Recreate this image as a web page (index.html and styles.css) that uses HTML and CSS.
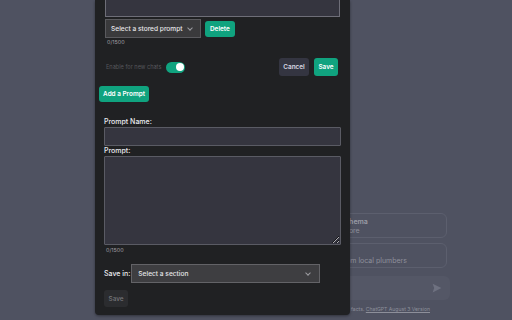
FILE: index.html
```html
<!DOCTYPE html>
<html lang="en">
<head>
<meta charset="UTF-8">
<title>Prompt Manager</title>
<link rel="stylesheet" href="styles.css">
</head>
<body>

<!-- Chat page behind the panel -->
<div class="chat-page">
    <div class="chat-column">
        <div class="examples">
            <div class="example">
                <strong>Plan a trip</strong>
                <span>to see the northern lights</span>
            </div>
            <div class="example">
                <strong>Design a database schema</strong>
                <span>for an online merch store</span>
            </div>
            <div class="example">
                <strong>Explain nostalgia</strong>
                <span>to a kindergartener</span>
            </div>
            <div class="example">
                <strong>Write an email</strong>
                <span>requesting a quote from local plumbers</span>
            </div>
        </div>
        <div class="chat-input">
            <span class="chat-placeholder">Send a message</span>
            <svg class="send-icon" width="10" height="10" viewBox="0 0 16 16"><path d="M1 1l14 7-14 7 2.5-7z" fill="currentColor"/></svg>
        </div>
        <p class="footer-note">ChatGPT may produce inaccurate information about people, places, or facts. <u>ChatGPT August 3 Version</u></p>
    </div>
</div>

<!-- Prompt panel -->
<div class="panel">
    <textarea class="top-area"></textarea>
    <div class="stored-row">
        <div class="select stored-select">Select a stored prompt <span class="chevron"></span></div>
        <button class="btn btn-green">Delete</button>
    </div>
    <div class="counter">0/1500</div>

    <div class="toggle-row">
        <span class="toggle-label">Enable for new chats</span>
        <span class="toggle"><span class="knob"></span></span>
        <div class="spacer"></div>
        <button class="btn btn-dark">Cancel</button>
        <button class="btn btn-green">Save</button>
    </div>

    <button class="btn btn-green add-btn">Add a Prompt</button>

    <div class="form">
        <label class="field-label">Prompt Name:</label>
        <input type="text" class="field-input">
        <label class="field-label">Prompt:</label>
        <textarea class="field-area"></textarea>
        <div class="counter">0/1500</div>
        <div class="save-row">
            <label class="field-label">Save in:</label>
            <div class="select section-select">Select a section <span class="chevron"></span></div>
        </div>
        <button class="btn btn-muted">Save</button>
    </div>
</div>

</body>
</html>
```

FILE: styles.css
```css
/* Basic Styles */
body {
    font-family: Inter, "Noto Sans", sans-serif;
    margin: 0;
    padding: 0;
    width: 512px;
    height: 320px;
    overflow: hidden;
    background-color: #4f5261;
    position: relative;
}
button, input, textarea {
    font-family: inherit;
}
/* Chat page */
.chat-page {
    height: 320px;
    display: flex;
    justify-content: flex-end;
    padding-right: 62px;
}
.chat-column {
    width: 350px;
    padding-top: 213px;
    display: flex;
    flex-direction: column;
}
.examples {
    display: grid;
    grid-template-columns: 1fr 179px;
    column-gap: 6px;
    row-gap: 5px;
    padding-right: 3px;
    height: 55px;
    overflow: hidden;
}
.examples .example:nth-child(1),
.examples .example:nth-child(3) {
    visibility: hidden;
}
.example {
    border: 1px solid #5c5f6e;
    border-radius: 6px;
    padding: 3px 8px;
    box-sizing: border-box;
    height: 25px;
    font-size: 7px;
    line-height: 9px;
    color: #8e909b;
    white-space: nowrap;
    overflow: hidden;
}
.example strong {
    display: block;
    color: #9a9ca6;
    font-weight: 600;
}
.chat-input {
    margin-top: 8px;
    height: 24px;
    border-radius: 6px;
    background-color: #545766;
    display: flex;
    align-items: center;
    padding: 0 8px;
    font-size: 7px;
    color: #7d7f8b;
}
.chat-placeholder {
    flex: 1;
}
.send-icon {
    color: #6e7180;
}
.footer-note {
    margin: 6px 0 0;
    font-size: 5.1px;
    color: #8d8f9a;
    text-align: right;
    white-space: nowrap;
    padding-right: 20px;
}
/* Panel */
.panel {
    position: absolute;
    top: 0;
    left: 95px;
    width: 255px;
    height: 315px;
    box-sizing: border-box;
    background-color: #202123;
    border-radius: 0 0 4px 4px;
    padding: 0 10px;
    display: flex;
    flex-direction: column;
    align-items: flex-start;
    box-shadow: 0 1px 3px rgba(0, 0, 0, 0.4);
}
.top-area {
    width: 235px;
    height: 17px;
    box-sizing: border-box;
    background-color: #35353f;
    border: 1px solid #6e6e78;
    border-top: none;
    resize: none;
    margin: 0;
}
.stored-row {
    display: flex;
    align-items: center;
    gap: 4px;
    margin-top: 2px;
}
.select {
    display: flex;
    align-items: center;
    justify-content: space-between;
    box-sizing: border-box;
    border: 1px solid #5a5a5e;
    color: #e6e6e8;
    font-size: 6.6px;
    font-weight: 500;
    white-space: nowrap;
}
.stored-select {
    width: 96px;
    height: 19px;
    background-color: #3a3a3c;
    padding: 0 8px 0 5px;
}
.section-select {
    width: 189px;
    height: 19px;
    background-color: #3e3e41;
    border-color: #636367;
    padding: 0 9px 0 6px;
}
.chevron {
    width: 3px;
    height: 3px;
    border-right: 1px solid #9c9ca0;
    border-bottom: 1px solid #9c9ca0;
    transform: rotate(45deg);
    margin-top: -2px;
}
.btn {
    border: none;
    border-radius: 3px;
    height: 16px;
    padding: 0 5px;
    font-size: 6.4px;
    font-weight: 600;
    color: #fff;
    cursor: pointer;
}
.btn-green {
    background-color: #10a37f;
}
.btn-dark {
    background-color: #343541;
    color: #d9d9e3;
    height: 18px;
    width: 30px;
    padding: 0;
}
.toggle-row .btn-green {
    height: 18px;
    width: 24px;
    padding: 0;
}
.btn-muted {
    background-color: #2b2c2f;
    color: #77777c;
    font-weight: 500;
    width: 24px;
    padding: 0;
}
.counter {
    font-size: 5.4px;
    color: #a0a0a6;
    margin: 1px 0 0 2px;
}
.toggle-row {
    display: flex;
    align-items: center;
    width: 233px;
    margin-top: 13px;
    gap: 5px;
}
.toggle-label {
    font-size: 5.6px;
    color: #56575c;
    margin-left: 1px;
}
.toggle {
    width: 19px;
    height: 11px;
    border-radius: 6px;
    background-color: #10a37f;
    display: flex;
    align-items: center;
    justify-content: flex-end;
    padding: 0 1px;
    box-sizing: border-box;
}
.knob {
    width: 8px;
    height: 8px;
    border-radius: 50%;
    background-color: #fff;
}
.spacer {
    flex: 1;
}
.add-btn {
    margin: 10px 0 0 -6px;
    width: 50px;
    padding: 0;
}
/* Add form */
.form {
    margin-top: 16px;
    display: flex;
    flex-direction: column;
    align-items: flex-start;
    margin-left: -1px;
}
.field-label {
    font-size: 7px;
    line-height: 8px;
    font-weight: 500;
    color: #ececf1;
    margin-bottom: 1px;
}
.field-input {
    width: 237px;
    height: 19px;
    box-sizing: border-box;
    background-color: #35353f;
    border: 1px solid #5a5b64;
    border-radius: 1px;
    margin: 0 0 1px;
}
.field-area {
    width: 237px;
    height: 89px;
    box-sizing: border-box;
    background-color: #35353f;
    border: 1px solid #5a5b64;
    border-radius: 1px;
    margin: 0;
}
.form .counter {
    margin-top: 2px;
}
.save-row {
    display: flex;
    align-items: center;
    gap: 1px;
    margin-top: 11px;
}
.save-row .field-label {
    margin: 0;
}
.form .btn-muted {
    margin-top: 7px;
    height: 17px;
}
```
